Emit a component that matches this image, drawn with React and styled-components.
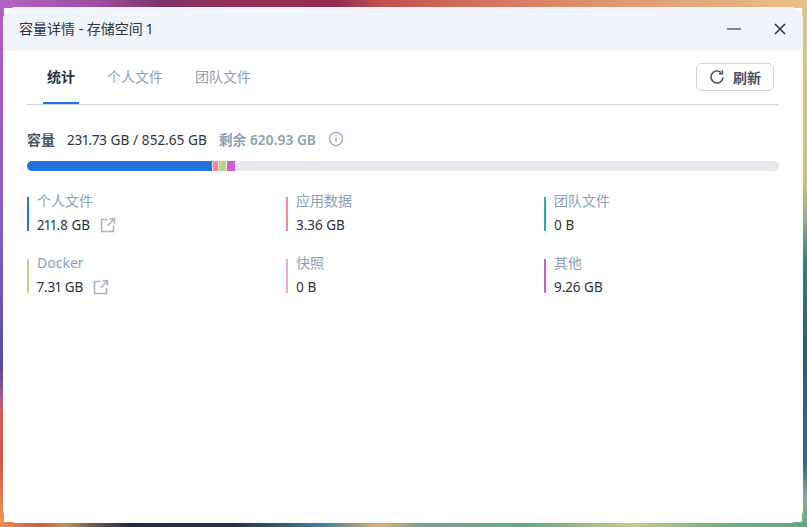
import React from 'react'
import styled, { createGlobalStyle } from 'styled-components'

const GlobalStyle = createGlobalStyle`
    html, body {
        margin: 0;
        padding: 0;
        height: 100%;
    }
    body {
        font-family: "Noto Sans", "Noto Sans CJK SC", sans-serif;
        font-variant-numeric: proportional-nums;
    }
`

const Desktop = styled.div`
    width: 807px;
    height: 527px;
    box-sizing: border-box;
    padding: 7px 4px 4px 3px;
    overflow: hidden;
    background:
        linear-gradient(90deg, #b464c4 0%, #9a50a0 12%, #7c3468 20%, #92305a 28%, #962c50 42%, #c05050 47%, #d06858 56%, #dc9070 72%, #e8c088 100%) top / 100% 8px no-repeat,
        linear-gradient(90deg, #ee8a58 0%, #d85c34 5%, #c89058 8%, #7a6050 11%, #202a44 16%, #283048 29%, #4080a0 40%, #e0b070 47%, #80a090 52%, #62aa84 65%, #c8cc80 78%, #70b080 90%, #60a880 100%) bottom / 100% 5px no-repeat,
        linear-gradient(180deg, #b060c0 0%, #9a5cb8 25%, #7e60b8 45%, #5a4a98 70%, #9a5898 75%, #d06050 78%, #cc5a48 88%, #f09858 100%) left / 4px 100% no-repeat,
        linear-gradient(180deg, #e8c088 0%, #d8c080 25%, #d0c070 35%, #8ab080 42%, #2a8088 50%, #226088 65%, #2a6898 88%, #7ab0a0 94%, #68b080 100%) right / 5px 100% no-repeat;
`

const Window = styled.div`
    height: 100%;
    background: #fff;
    border-radius: 14px;
    overflow: hidden;
    display: flex;
    flex-direction: column;
`

const TitleBar = styled.div`
    height: 44px;
    flex: none;
    background: #f0f3f9;
    display: flex;
    align-items: center;
    justify-content: space-between;
    padding: 0 15px 0 16px;
`

const Title = styled.div`
    font-size: 14px;
    margin-top: -2px;
    color: #2b3440;
`

const WindowControls = styled.div`
    display: flex;
    align-items: center;
    gap: 30px;
`

const ControlIcon = styled.svg`
    width: 16px;
    height: 16px;
    display: block;
`

const Body = styled.div`
    flex: 1;
    padding: 0 24px;
`

const TabRow = styled.div`
    height: 53px;
    display: flex;
    align-items: center;
    justify-content: space-between;
    border-bottom: 1px solid #ccd3dc;
`

const Tabs = styled.div`
    display: flex;
    height: 100%;
    margin-left: 20px;
    gap: 32px;
`

const Tab = styled.div`
    position: relative;
    display: flex;
    align-items: center;
    font-size: 14px;
    padding-bottom: 3px;
    font-weight: ${props => props.active ? 700 : 400};
    color: ${props => props.active ? '#2b3440' : '#8c9eb8'};

    ${props => props.active && `
        &::after {
            content: "";
            position: absolute;
            left: -4px;
            right: -4px;
            bottom: 0;
            height: 2px;
            background: #2272e0;
        }
    `}
`

const RefreshButton = styled.button`
    width: 78px;
    height: 28px;
    margin: -1px 5px 0 0;
    box-sizing: border-box;
    padding: 0;
    background: #fff;
    border: 1px solid #ccd3dc;
    border-radius: 6px;
    display: flex;
    align-items: center;
    justify-content: center;
    gap: 8px;
    font-family: inherit;
    font-size: 14px;
    font-weight: 700;
    color: #4c5666;
`

const Capacity = styled.div`
    display: flex;
    align-items: center;
    margin-top: 24px;
    height: 20px;
    font-size: 13.7px;
    color: #2b3440;
`

const CapacityLabel = styled.span`
    font-size: 14px;
    font-weight: 700;
    color: #4c5666;
    margin-right: 12px;
`

const Remaining = styled.span`
    font-size: 13.7px;
    font-weight: 600;
    color: #8c9eb8;
    margin-left: 12px;
    margin-right: 12px;
`

const UsageBar = styled.div`
    display: flex;
    height: 10px;
    margin-top: 12px;
    background: #e8e9ee;
    border-radius: 5px;
    overflow: hidden;
`

const UsagePart = styled.div`
    height: 100%;
    background: ${props => props.color};
    margin-right: ${props => props.gap || 0}px;
`

const StatsGrid = styled.div`
    display: grid;
    grid-template-columns: 259px 258px 1fr;
    row-gap: 28px;
    margin-top: 26px;
`

const Stat = styled.div`
    height: 34px;
    border-left: 2px solid ${props => props.color};
    padding-left: 8px;
`

const StatName = styled.div`
    font-size: 14px;
    line-height: 18px;
    margin-top: -5px;
    color: #8c9eb8;
`

const StatValue = styled.div`
    display: flex;
    align-items: center;
    gap: 10px;
    font-size: 13.5px;
    line-height: 18px;
    margin-top: 6px;
    color: #2b3440;
`

const LinkIcon = styled.svg`
    width: 16px;
    height: 16px;
    display: block;
`

const ExternalLink = () => (
    <LinkIcon viewBox="0 0 16 16" fill="none" stroke="#a9b6c8" strokeWidth="1.6">
        <path d="M7.5 2.5H1.5v12h12V9" />
        <path d="M9.5 1.8h5v5M14.2 2 7.5 8.7" />
    </LinkIcon>
)

const stats = [
    { name: '个人文件', value: '211.8 GB', color: '#2272e0', link: true },
    { name: '应用数据', value: '3.36 GB', color: '#fb8598' },
    { name: '团队文件', value: '0 B', color: '#2fae9e' },
    { name: 'Docker', value: '7.31 GB', color: '#b4d788', link: true },
    { name: '快照', value: '0 B', color: '#e8a8e4' },
    { name: '其他', value: '9.26 GB', color: '#d25ad6' },
]

const App = () => {
    return (
        <>
            <GlobalStyle />
            <Desktop>
                <Window>
                    <TitleBar>
                        <Title>容量详情 - 存储空间 1</Title>
                        <WindowControls>
                            <ControlIcon viewBox="0 0 16 16" stroke="#5c6470" strokeWidth="1.6">
                                <path d="M1 8h14" />
                            </ControlIcon>
                            <ControlIcon viewBox="0 0 16 16" stroke="#2b3440" strokeWidth="1.5">
                                <path d="M3 3l10 10M13 3 3 13" />
                            </ControlIcon>
                        </WindowControls>
                    </TitleBar>
                    <Body>
                        <TabRow>
                            <Tabs>
                                <Tab active>统计</Tab>
                                <Tab>个人文件</Tab>
                                <Tab>团队文件</Tab>
                            </Tabs>
                            <RefreshButton>
                                <svg width="16" height="16" viewBox="0 0 16 16" fill="none" stroke="#4c5666" strokeWidth="1.6">
                                    <path d="M14 8.2A6 6 0 1 1 11.9 3.4" />
                                    <path d="M13.4 1.2v3.4H10" />
                                </svg>
                                刷新
                            </RefreshButton>
                        </TabRow>
                        <Capacity>
                            <CapacityLabel>容量</CapacityLabel>
                            231.73 GB / 852.65 GB
                            <Remaining>剩余 620.93 GB</Remaining>
                            <svg width="16" height="16" viewBox="0 0 16 16" fill="none" stroke="#8c9eb8" strokeWidth="1.2">
                                <circle cx="8" cy="8" r="6.6" />
                                <path d="M8 7v4.2M8 4.4v1.4" />
                            </svg>
                        </Capacity>
                        <UsageBar>
                            <UsagePart color="#2272e0" gap={1} style={{ width: 185 }} />
                            <UsagePart color="#fb8598" gap={1} style={{ width: 5 }} />
                            <UsagePart color="#b4d788" gap={1} style={{ width: 7 }} />
                            <UsagePart color="#d25ad6" style={{ width: 8 }} />
                        </UsageBar>
                        <StatsGrid>
                            {stats.map((item) => (
                                <Stat color={item.color} key={item.name}>
                                    <StatName>{item.name}</StatName>
                                    <StatValue>
                                        {item.value}
                                        {item.link && <ExternalLink />}
                                    </StatValue>
                                </Stat>
                            ))}
                        </StatsGrid>
                    </Body>
                </Window>
            </Desktop>
        </>
    )
}

export default App
